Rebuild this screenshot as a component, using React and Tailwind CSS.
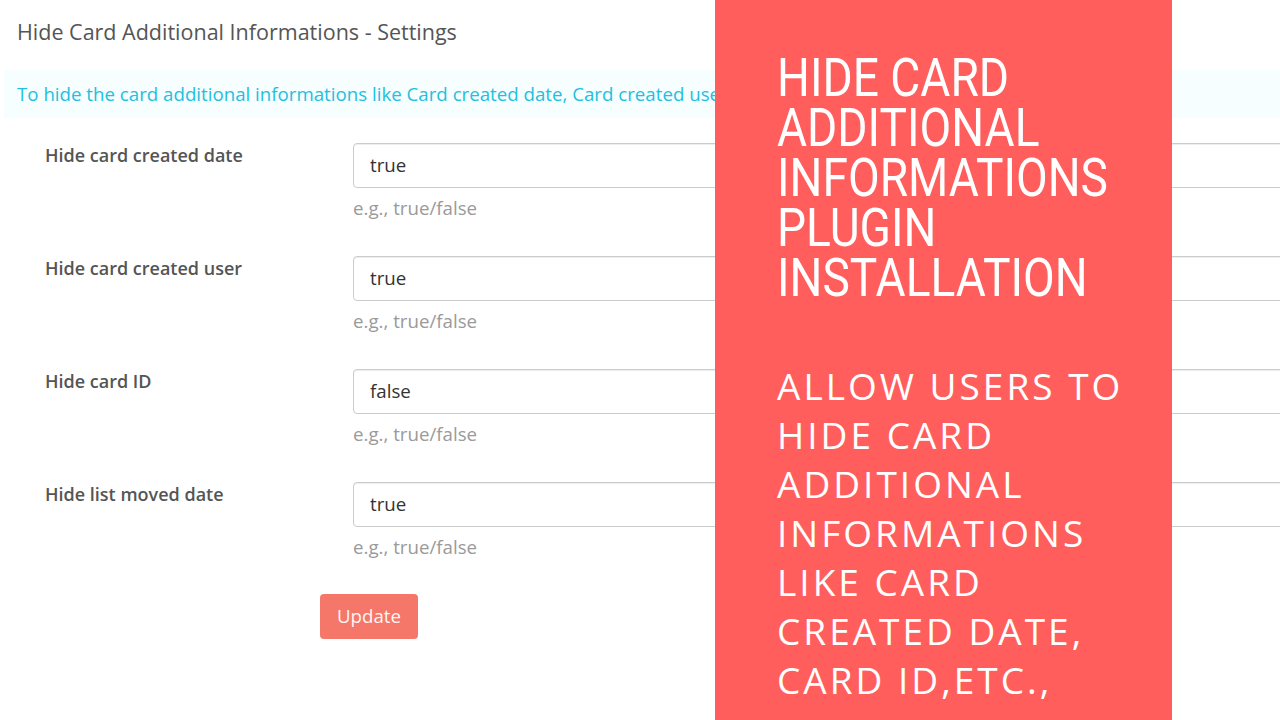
import React from "react";

const rows = [
  { label: "Hide card created date", value: "true" },
  { label: "Hide card created user", value: "true" },
  { label: "Hide card ID", value: "false" },
  { label: "Hide list moved date", value: "true" },
];

export default function App() {
  return (
    <div className="relative w-[1280px] h-[720px] overflow-hidden bg-white" style={{ fontFamily: '"Open Sans", sans-serif' }}>
      <div className="pt-[18px]">
        <h1 className="pl-[17px] text-[21.5px] leading-[28px] text-[#555555] font-normal">Hide Card Additional Informations - Settings</h1>
        <div className="mt-[24px] ml-[4px] h-[48px] bg-[#f6feff] flex items-center pl-[13px] text-[18.7px] text-[#23c0de] whitespace-nowrap">
          To hide the card additional informations like Card created date, Card created user, Card ID and List moved date in the card
        </div>
        <div className="pt-[25px] pl-[45px]">
          {rows.map((r) => (
            <div key={r.label} className="flex mb-[36px]">
              <div className="w-[308px] shrink-0 text-[18px] leading-[24px] font-semibold text-[#555555]">{r.label}</div>
              <div className="flex-1">
                <div className="h-[45px] border border-[#cccccc] rounded-[4px] flex items-center pl-[16px] text-[18.7px] text-[#333333] shadow-[inset_0_1px_1px_rgba(0,0,0,0.075)] w-[1000px]">
                  {r.value}
                </div>
                <div className="mt-[8px] text-[18.7px] leading-[24px] text-[#9a9a9a]">e.g., true/false</div>
              </div>
            </div>
          ))}
          <div className="pl-[275px] -mt-[1px]">
            <button className="h-[45px] w-[98px] rounded-[4px] bg-[#f5776a] text-[#fff5f2] text-[18.7px]">Update</button>
          </div>
        </div>
      </div>
      <div className="absolute top-0 left-[715px] w-[457px] h-[720px] bg-[#ff5e5c] pl-[62px] text-white">
        <div className="pt-[53px]" style={{ fontFamily: 'Roboto, sans-serif' }}>
          {["HIDE CARD", "ADDITIONAL", "INFORMATIONS", "PLUGIN", "INSTALLATION"].map((t) => (
            <div key={t} className="text-[53px] leading-[50px] whitespace-nowrap origin-left scale-x-[0.87]">{t}</div>
          ))}
        </div>
        <div className="mt-[58px] text-[37px] leading-[49px] tracking-[3px]" style={{ fontFamily: '"Open Sans", sans-serif' }}>
          {["ALLOW USERS TO", "HIDE CARD", "ADDITIONAL", "INFORMATIONS", "LIKE CARD", "CREATED DATE,", "CARD ID,ETC.,"].map((t) => (
            <div key={t} className="whitespace-nowrap">{t}</div>
          ))}
        </div>
      </div>
    </div>
  );
}
